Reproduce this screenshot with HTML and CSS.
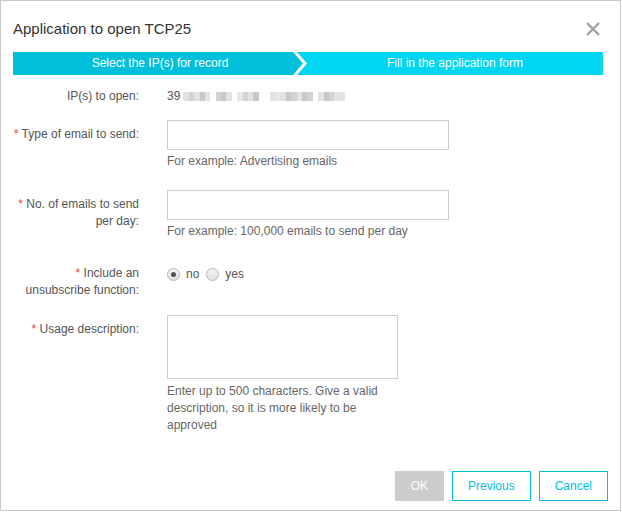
FILE: index.html
```html
<!DOCTYPE html>
<html lang="en">
<head>
  <meta charset="UTF-8">
  <title>Application to open TCP25</title>
  <link rel="stylesheet" href="styles.css">
</head>
<body>

<div class="dialog">
  <!-- Header -->
  <div class="dialog-header">
    <div class="dialog-title">Application to open TCP25</div>
    <svg class="close-icon" width="14" height="14" viewBox="0 0 14 14">
      <path d="M1 1 L13 13 M13 1 L1 13" stroke="#a0a0a0" stroke-width="2.3" fill="none"/>
    </svg>
  </div>

  <!-- Steps -->
  <div class="step-bar">
    <div class="step step-done"><span>Select the IP(s) for record</span></div>
    <div class="step step-current"><span>Fill in the application form</span></div>
  </div>

  <!-- Form -->
  <div class="form">
    <div class="form-row row-ip">
      <div class="form-label">IP(s) to open:</div>
      <div class="form-field ip-value">
        <span>39</span>
        <span class="blur">
          <i class="c1"></i><i class="c2"></i><i class="c1"></i><i class="c3"></i><i class="c1"></i><i class="gap"></i>
          <i class="c2"></i><i class="c3"></i><i class="c4"></i><i class="gap"></i>
          <i class="c5"></i><i class="c2"></i><i class="c1"></i><i class="c3"></i><i class="gap"></i><i class="gap"></i>
          <i class="c4"></i><i class="c5"></i><i class="c1"></i><i class="c3"></i><i class="c2"></i><i class="c1"></i><i class="c3"></i><i class="c2"></i><i class="gap"></i>
          <i class="c1"></i><i class="c3"></i><i class="c2"></i><i class="c1"></i><i class="c4"></i>
        </span>
      </div>
    </div>

    <div class="form-row row-type">
      <div class="form-label"><em>*</em> Type of email to send:</div>
      <div class="form-field">
        <div class="text-input"></div>
        <div class="help">For example: Advertising emails</div>
      </div>
    </div>

    <div class="form-row row-count">
      <div class="form-label"><em>*</em> No. of emails to send<br>per day:</div>
      <div class="form-field">
        <div class="text-input"></div>
        <div class="help">For example: 100,000 emails to send per day</div>
      </div>
    </div>

    <div class="form-row row-unsub">
      <div class="form-label"><em>*</em> Include an<br>unsubscribe function:</div>
      <div class="form-field radios">
        <label class="radio"><span class="dot checked"></span>no</label>
        <label class="radio"><span class="dot"></span>yes</label>
      </div>
    </div>

    <div class="form-row row-desc">
      <div class="form-label"><em>*</em> Usage description:</div>
      <div class="form-field">
        <div class="text-area"></div>
        <div class="help help-wrap">Enter up to 500 characters. Give a valid<br>description, so it is more likely to be<br>approved</div>
      </div>
    </div>
  </div>

  <!-- Footer -->
  <div class="dialog-footer">
    <button class="btn btn-disabled">OK</button>
    <button class="btn btn-line">Previous</button>
    <button class="btn btn-line">Cancel</button>
  </div>
</div>

</body>
</html>
```

FILE: styles.css
```css
body {
  margin: 0;
  font-family: "Liberation Sans", Arial, sans-serif;
  background-color: #fff;
}

.dialog {
  width: 621px;
  height: 511px;
  box-sizing: border-box;
  border: 1px solid #c8c8c8;
  display: flex;
  flex-direction: column;
}

/* Header */
.dialog-header {
  display: flex;
  justify-content: space-between;
  align-items: center;
  padding: 18px 20px 0 12px;
  height: 20px;
}

.dialog-title {
  font-size: 15px;
  color: #333;
  line-height: 20px;
}

.close-icon {
  display: block;
}

/* Step bar */
.step-bar {
  display: flex;
  height: 23px;
  margin: 13px 17px 0 12px;
  background-color: #00d5f1;
  color: #fff;
  font-size: 12px;
  line-height: 23px;
}

.step {
  position: relative;
  text-align: center;
}

.step span {
  position: relative;
}

.step-done {
  flex: 0 0 294px;
}

.step-done::before,
.step-done::after {
  content: "";
  position: absolute;
  top: 0;
  left: 0;
  right: 0;
  bottom: 0;
}

.step-done::before {
  background-color: #00bfdb;
  clip-path: polygon(0 0, 280px 0, 290px 50%, 280px 100%, 0 100%);
}

.step-done::after {
  background-color: #fff;
  clip-path: polygon(280px 0, 284px 0, 294px 50%, 284px 100%, 280px 100%, 290px 50%);
}

.step-current {
  flex: 1;
}

/* Form */
.form {
  padding-top: 13px;
  font-size: 12px;
  color: #555;
}

.form-row {
  display: flex;
}

.form-label {
  width: 138px;
  text-align: right;
  margin-right: 28px;
  line-height: 17px;
  padding-top: 6px;
  box-sizing: border-box;
}

.form-label em {
  color: #f04134;
  font-style: normal;
}

.form-field {
  flex: 0 0 auto;
}

.row-ip .form-label {
  padding-top: 0;
}

.row-ip {
  margin-bottom: 15px;
}

.row-type {
  margin-bottom: 20px;
}

.row-count {
  margin-bottom: 19px;
}

.row-unsub {
  margin-bottom: 16px;
}

.ip-value {
  display: flex;
  align-items: center;
  line-height: 17px;
  color: #555;
}

.blur {
  display: flex;
  margin-left: 3px;
  height: 9px;
}

.blur i {
  display: block;
  width: 5.4px;
  height: 9px;
}

.blur .c1 { background-color: #e2e2e2; }
.blur .c2 { background-color: #d3d3d3; }
.blur .c3 { background-color: #c8c8c8; }
.blur .c4 { background-color: #dde4ea; }
.blur .c5 { background-color: #ebe6df; }
.blur .gap { background-color: transparent; }

.text-input {
  width: 282px;
  height: 30px;
  box-sizing: border-box;
  border: 1px solid #ccc;
}

.text-area {
  width: 231px;
  height: 64px;
  box-sizing: border-box;
  border: 1px solid #ccc;
}

.help {
  margin-top: 3px;
  line-height: 17px;
  color: #666;
}

.help-wrap {
  margin-top: 4px;
}

.radios {
  display: flex;
  align-items: center;
  height: 30px;
}

.radio {
  display: flex;
  align-items: center;
  margin-right: 7px;
}

.dot {
  width: 11px;
  height: 11px;
  border: 1px solid #b5b5b5;
  border-radius: 50%;
  background: linear-gradient(#f5f5f5, #e2e2e2);
  margin-right: 6px;
  position: relative;
}

.dot.checked::after {
  content: "";
  position: absolute;
  left: 3px;
  top: 3px;
  width: 5px;
  height: 5px;
  border-radius: 50%;
  background-color: #555;
}

/* Footer */
.dialog-footer {
  margin-top: auto;
  display: flex;
  justify-content: flex-end;
  gap: 8px;
  padding: 0 12px 9px 0;
}

.btn {
  height: 30px;
  padding: 0 15px;
  font-family: "Liberation Sans", Arial, sans-serif;
  font-size: 12px;
  background-color: #fff;
  cursor: pointer;
}

.btn-disabled {
  width: 49px;
  padding: 0;
  background-color: #ccc;
  border: 1px solid #ccc;
  color: #fff;
}

.btn-line {
  border: 1px solid #00c1de;
  color: #00c1de;
}
```
